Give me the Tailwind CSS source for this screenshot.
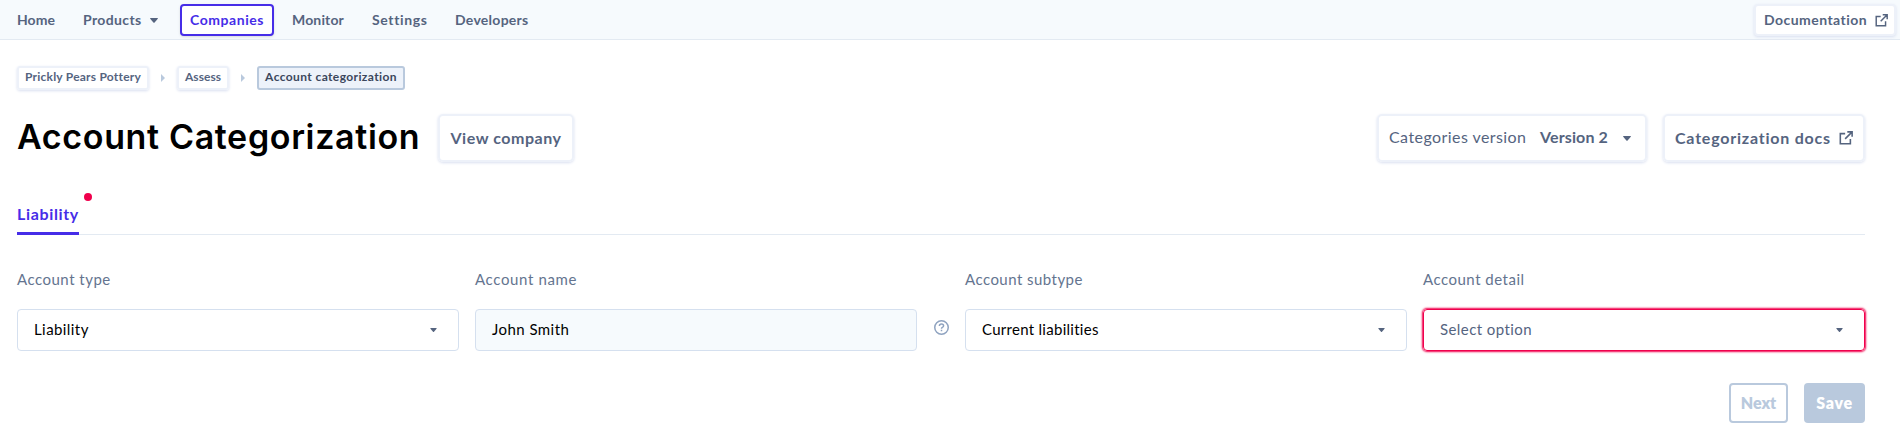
<!DOCTYPE html>
<html lang="en">
<head>
<meta charset="utf-8">
<title>Account Categorization</title>
<script src="https://cdn.jsdelivr.net/npm/@tailwindcss/browser@4"></script>
</head>
<body class="h-[437px] overflow-hidden bg-white font-['Lato',sans-serif] whitespace-nowrap text-[#55647f]">
<svg class="hidden">
  <symbol id="external" viewBox="0 0 16 16"><path d="M7 3H1.5v11.5H13V9M9.5 1H15v5.5M15 1 7 9" fill="none" stroke="currentColor" stroke-width="1.8"/></symbol>
  <symbol id="down" viewBox="0 0 8 5"><path d="M.5 0h7q.6.2.3.8L4.6 4.6q-.6.5-1.2 0L.2.8Q-.1.2.5 0" fill="currentColor"/></symbol>
  <symbol id="right" viewBox="0 0 4 8"><path d="M0 0l4 4-4 4z" fill="currentColor"/></symbol>
</svg>

<header class="flex h-10 items-start justify-between border-b border-[#e3eaf2] bg-[#f6fafd] pl-[17px] pr-[4px] text-sm font-bold">
  <nav class="flex h-10 items-center">
    <a class="w-[66px] pb-px tracking-[0.05px]">Home</a>
    <a class="flex w-[97px] items-center pb-px"><span class="w-[67px] tracking-[0.37px]">Products</span><svg class="mt-px h-[5px] w-2"><use href="#down"/></svg></a>
    <a class="flex h-8 w-[94px] items-center justify-center rounded-[4px] border-2 border-[#462de8] bg-white pb-px tracking-[0.55px] text-[#462de8] shadow-sm">Companies</a>
    <a class="ml-[18px] w-[80px] pb-px tracking-[0.15px]">Monitor</a>
    <a class="w-[83px] pb-px tracking-[0.62px]">Settings</a>
    <a class="pb-px tracking-[0.27px]">Developers</a>
  </nav>
  <a class="mt-1 flex h-8 w-[142px] items-center rounded-[4px] border-2 border-[#edf1f9] bg-white pl-2 shadow-[0_1px_3px_#d9dff0]"><span class="w-[111px] pb-px tracking-[0.45px]">Documentation</span><svg class="h-[13px] w-[13px]"><use href="#external"/></svg></a>
</header>

<main class="pl-[17px] pr-[35px]">
  <div class="mt-[26px] flex h-6 items-center text-xs font-bold">
    <a class="flex h-6 w-[132px] items-center justify-center rounded-[3px] border-2 border-[#edf1f9] pb-0.5 tracking-[0.23px] shadow-[0_1px_3px_#d9dff0]">Prickly Pears Pottery</a>
    <svg class="mx-3 h-2 w-1 text-[#b9c9dd]"><use href="#right"/></svg>
    <a class="flex h-6 w-[52px] items-center justify-center rounded-[3px] border-2 border-[#edf1f9] pb-0.5 tracking-[0.03px] shadow-[0_1px_3px_#d9dff0]">Assess</a>
    <svg class="mx-3 h-2 w-1 text-[#b9c9dd]"><use href="#right"/></svg>
    <a class="flex h-6 w-[148px] items-center justify-center rounded-[3px] border-2 border-[#b9c9dd] bg-[#edf2fa] pb-0.5 tracking-[0.39px] text-[#3b465c]">Account categorization</a>
  </div>

  <div class="mt-6 flex h-12 items-center justify-between font-bold">
    <div class="flex items-center">
      <h1 class="w-[421px] pb-0.5 font-['Inter',sans-serif] text-[34px] leading-[46px] font-semibold tracking-[0.65px] text-black">Account Categorization</h1>
      <a class="flex h-12 w-[136px] items-center justify-center rounded-[5px] border-2 border-[#edf1f9] tracking-[0.55px] shadow-[0_1px_3px_#d9dff0]">View company</a>
    </div>
    <div class="flex gap-4">
      <div class="flex h-12 w-[270px] items-center rounded-[5px] border-2 border-[#edf1f9] pb-0.5 pl-[10px] shadow-[0_1px_3px_#d9dff0]">
        <span class="w-[151px] font-normal tracking-[0.43px]">Categories version</span><span class="w-[83px] tracking-[0.13px]">Version 2</span><svg class="mt-0.5 h-[5px] w-2"><use href="#down"/></svg>
      </div>
      <a class="flex h-12 w-[202px] items-center rounded-[5px] border-2 border-[#edf1f9] pl-[10px] shadow-[0_1px_3px_#d9dff0]"><span class="w-[164px] pb-px tracking-[0.78px]">Categorization docs</span><svg class="h-[14px] w-[14px]"><use href="#external"/></svg></a>
    </div>
  </div>

  <div class="mt-[31px] h-[42px] border-b border-[#e3eaf2]">
    <div class="relative flex h-[42px] w-[62px] items-center border-b-[3px] border-[#462de8] pt-[3px] font-bold tracking-[0.65px] text-[#462de8]">Liability<span class="absolute top-0 left-[67px] h-2 w-2 rounded-full bg-[#f0004c]"></span></div>
  </div>

  <div class="mt-[34px] flex text-[15px]">
    <div class="w-[442px]">
      <div class="h-10 leading-[20px] tracking-[0.5px] text-[#64748f]">Account type</div>
      <div class="flex h-[42px] items-center justify-between rounded-[4px] border border-[#d5e0ef] pb-px pl-4 pr-[21px] tracking-[0.42px] text-black">Liability<svg class="h-1 w-[7px] text-[#55647f]"><use href="#down"/></svg></div>
    </div>
    <div class="ml-4 w-[442px]">
      <div class="h-10 leading-[20px] tracking-[0.63px] text-[#64748f]">Account name</div>
      <div class="flex h-[42px] items-center rounded-[4px] border border-[#d5e0ef] bg-[#f6fafd] pb-px pl-4 tracking-[0.45px] text-black">John Smith</div>
    </div>
    <svg class="mt-[51px] ml-[17px] h-[15px] w-[15px]" viewBox="0 0 15 15" fill="none" stroke="#8fa3c0" stroke-width="1.5"><circle cx="7.5" cy="7.5" r="6.75"/><path d="M5.4 6q0-2 2.1-2t2.1 1.8q0 1.1-1.2 1.6-.9.4-.9 1.4M7.5 9.8v1.5"/></svg>
    <div class="ml-4 w-[442px]">
      <div class="h-10 leading-[20px] tracking-[0.46px] text-[#64748f]">Account subtype</div>
      <div class="flex h-[42px] items-center justify-between rounded-[4px] border border-[#d5e0ef] pb-px pl-4 pr-[21px] tracking-[0.28px] text-black">Current liabilities<svg class="h-1 w-[7px] text-[#55647f]"><use href="#down"/></svg></div>
    </div>
    <div class="ml-4 w-[442px]">
      <div class="h-10 leading-[20px] tracking-[0.5px] text-[#64748f]">Account detail</div>
      <div class="flex h-[42px] items-center justify-between rounded-[4px] border border-[#f0004c] pb-px pl-4 pr-[21px] tracking-[0.43px] shadow-[0_0_2px_1px_#f0004c]">Select option<svg class="h-1 w-[7px]"><use href="#down"/></svg></div>
    </div>
  </div>

  <div class="mt-8 flex justify-end gap-4 font-extrabold">
    <button class="h-10 w-[59px] rounded-[4px] border-2 border-[#b9c9dd] text-[#b9c9dd]">Next</button>
    <button class="h-10 w-[61px] rounded-[4px] bg-[#b9c9dd] tracking-[0.7px] text-white">Save</button>
  </div>
</main>
</body>
</html>
